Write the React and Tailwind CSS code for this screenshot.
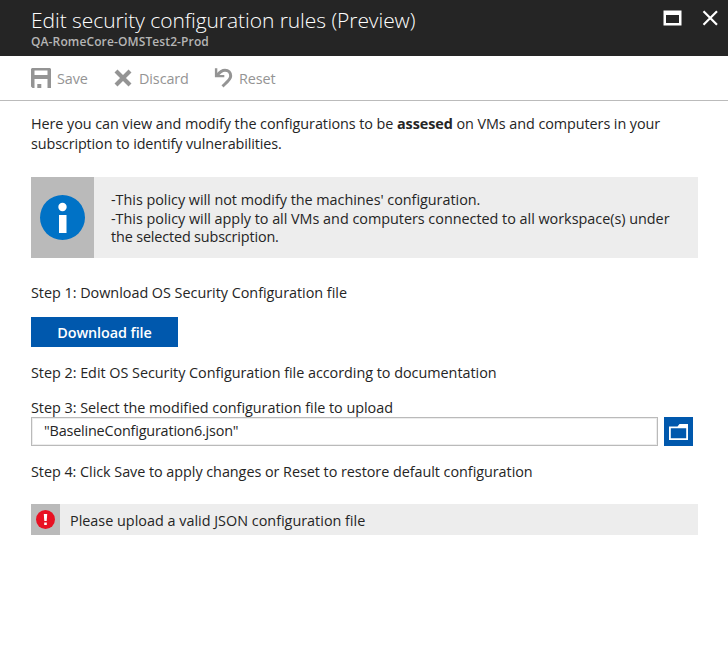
function SaveIcon() {
  return (
    <svg className="h-5 w-5 shrink-0" viewBox="0 0 20 20" fill="#949494">
      <path
        fillRule="evenodd"
        d="M1 0H19L20 1V20H16.5V11H3.5V20H1.5L0 18.5V1ZM3.5 2.5V7H16.5V2.5Z"
      />
      <rect x="6.3" y="16" width="4" height="4" />
    </svg>
  );
}

function DiscardIcon() {
  return (
    <svg className="h-[18px] w-[18px] shrink-0" viewBox="0 0 18 18" fill="none" stroke="#949494" strokeWidth="4.2">
      <path d="M2 2L16 16M16 2L2 16" />
    </svg>
  );
}

function ResetIcon() {
  return (
    <svg className="h-5 w-[19px] shrink-0" viewBox="0 0 19 20" fill="none" stroke="#949494">
      <path d="M3 7.5C6 3.5 8.5 2.2 11 2.2C14.5 2.2 16.7 4.8 16.7 8C16.7 11.5 12.5 14.5 8.5 18.3" strokeWidth="3" />
      <path d="M2.1 0.3V8.1H10.3" strokeWidth="2.4" />
    </svg>
  );
}

function ToolbarItem({ icon, label, className }) {
  return (
    <button className={`flex items-center ${className}`}>
      {icon}
      <span className="pt-px tracking-[-0.1px]">{label}</span>
    </button>
  );
}

export default function App() {
  return (
    <div className="h-[661px] w-[728px] overflow-hidden bg-white font-['Open_Sans','Noto_Sans',sans-serif] text-[14.4px] leading-5 whitespace-nowrap text-[#252525]">
      <header className="flex h-14 justify-between bg-[#252525] pr-[10px] pl-[31px]">
        <div className="pt-[6px]">
          <h1 className="text-[21px] leading-7 font-light tracking-[-0.06px] text-white">
            Edit security configuration rules (Preview)
          </h1>
          <p className="text-[12px] leading-[15px] font-semibold tracking-[0.12px] text-[#b5b5b5]">
            QA-RomeCore-OMSTest2-Prod
          </p>
        </div>
        <div className="flex gap-5 pt-[10px]">
          <svg className="h-4 w-[19px]" viewBox="0 0 19 16">
            <path fillRule="evenodd" fill="#fff" d="M0.5 0.5H18.5V15.5H0.5ZM3 5V13H16V5Z" />
          </svg>
          <svg className="h-4 w-4" viewBox="0 0 16 16" fill="none" stroke="#fff" strokeWidth="2.2">
            <path d="M1.5 1.2L15 14.8M15 1.2L1.5 14.8" />
          </svg>
        </div>
      </header>

      <nav className="flex h-[45px] items-center border-b border-[#bbb] pl-[31px] text-[#949494]">
        <ToolbarItem icon={<SaveIcon />} label="Save" className="w-[83px] gap-[6px]" />
        <ToolbarItem icon={<DiscardIcon />} label="Discard" className="w-[100px] gap-[7px]" />
        <ToolbarItem icon={<ResetIcon />} label="Reset" className="gap-[6px]" />
      </nav>

      <main className="pt-[13px] pr-[30px] pl-[31px]">
        <p className="tracking-[-0.07px]">
          Here you can view and modify the configurations to be <b>assesed</b> on VMs and computers in your
        </p>
        <p className="tracking-[-0.12px]">subscription to identify vulnerabilities.</p>

        <section className="mt-[23px] flex h-[81px] bg-[#ededed]">
          <div className="flex w-[63px] items-center justify-center bg-[#bababa]">
            <svg className="h-[45px] w-[45px]" viewBox="0 0 45 45">
              <circle cx="22.5" cy="22.5" r="22.5" fill="#0072c6" />
              <circle cx="22.5" cy="12" r="4.2" fill="#fff" />
              <rect x="19" y="20" width="7.5" height="18" fill="#fff" />
            </svg>
          </div>
          <div className="pt-[14px] pl-[17px] leading-[18.67px]">
            <p className="tracking-[-0.03px]">-This policy will not modify the machines' configuration.</p>
            <p className="tracking-[-0.02px]">
              -This policy will apply to all VMs and computers connected to all workspace(s) under
            </p>
            <p className="tracking-[-0.15px]">the selected subscription.</p>
          </div>
        </section>

        <p className="mt-[25px] tracking-[-0.025px]">Step 1: Download OS Security Configuration file</p>
        <button className="mt-[14px] flex h-[30px] w-[147px] items-center justify-center bg-[#0058ad] pt-px font-semibold tracking-[-0.08px] text-white">
          Download file
        </button>
        <p className="mt-4 tracking-[-0.03px]">Step 2: Edit OS Security Configuration file according to documentation</p>
        <p className="mt-[15px] tracking-[-0.03px]">Step 3: Select the modified configuration file to upload</p>

        <div className="-mt-px flex gap-[6px]">
          <div className="flex h-[29px] w-[627px] items-center border border-[#bababa] pb-[2px] pl-3 shadow-[inset_0_0_0_1px_#ededed]">
            <span className="tracking-[-0.18px]">"BaselineConfiguration6.json"</span>
          </div>
          <button className="flex h-[29px] w-[29px] items-center justify-center bg-[#0058ad]">
            <svg className="h-4 w-[19px]" viewBox="0 0 19 16">
              <path fillRule="evenodd" fill="#fff" d="M0 2.5H8.5L10.5 0H19V16H0ZM1.8 4.3V14.2H17.2V4.3Z" />
            </svg>
          </button>
        </div>

        <p className="mt-4 tracking-[-0.045px]">Step 4: Click Save to apply changes or Reset to restore default configuration</p>

        <section className="mt-[22px] flex h-[31px] items-center bg-[#ededed]">
          <div className="flex h-full w-[29px] items-center justify-center bg-[#bababa]">
            <svg className="h-[19px] w-[19px]" viewBox="0 0 19 19">
              <circle cx="9.5" cy="9.5" r="9.5" fill="#e81123" />
              <path d="M7.8 4H11.2L10.7 11H8.3Z" fill="#fff" />
              <rect x="8.2" y="12.5" width="2.6" height="2.5" fill="#fff" />
            </svg>
          </div>
          <p className="pt-[2px] pl-[10px]">Please upload a valid JSON configuration file</p>
        </section>
      </main>
    </div>
  );
}
